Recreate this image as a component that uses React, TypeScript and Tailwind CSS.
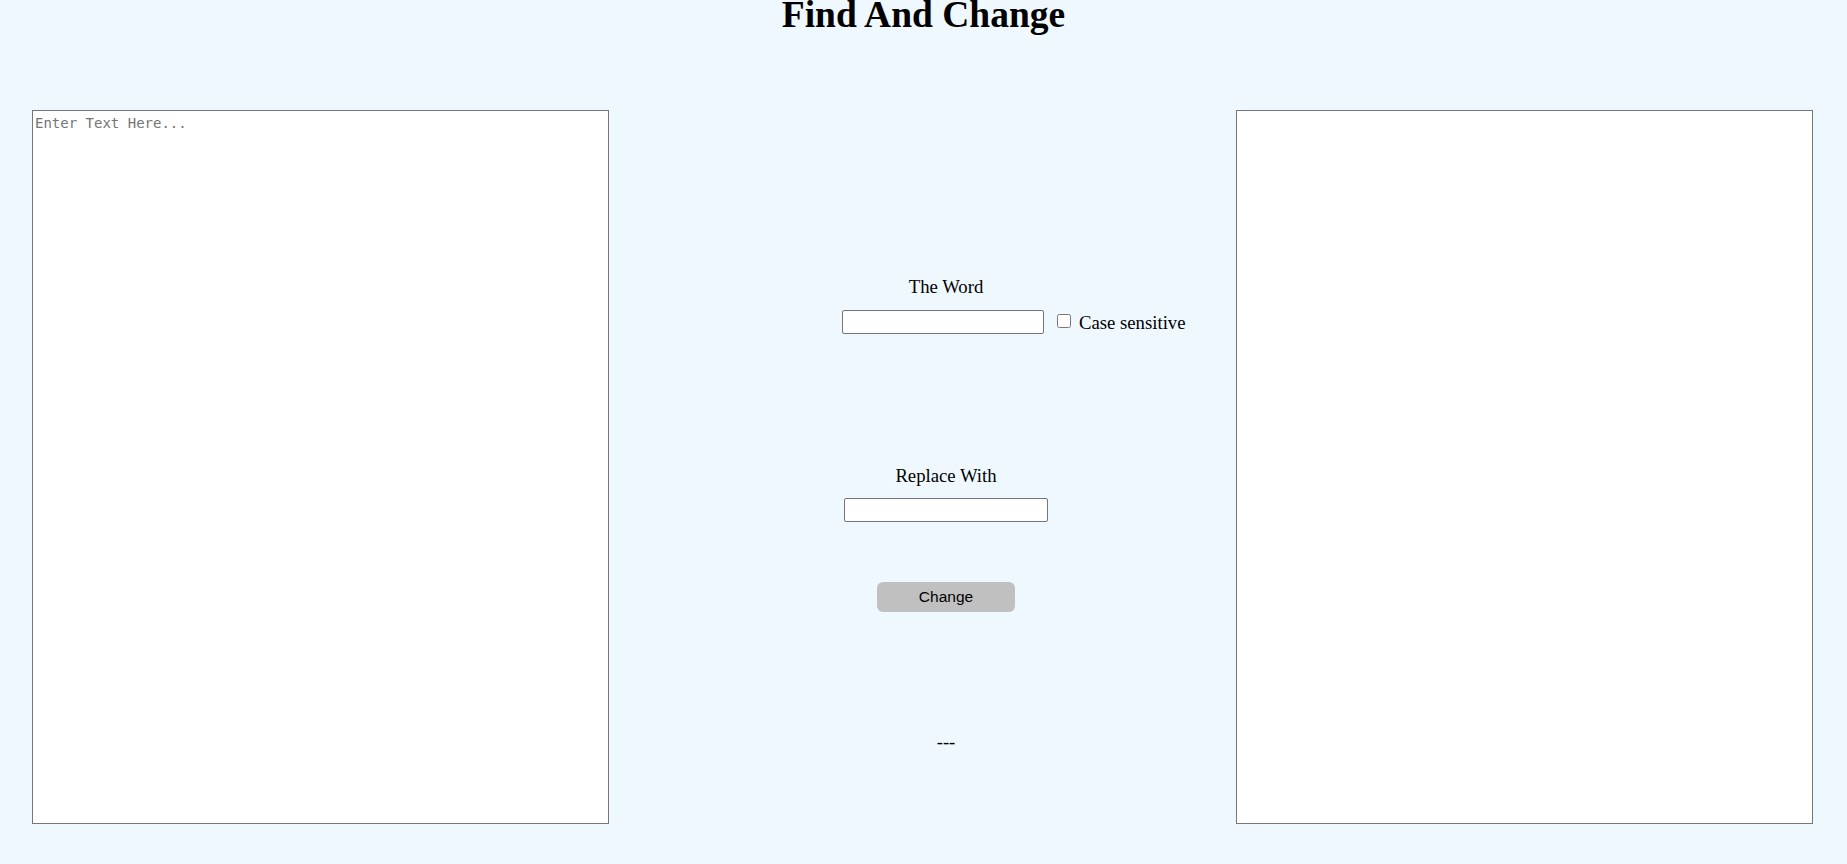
import React from 'react';

const App = () => {
  return (
    <div className="min-h-screen bg-[#f0f8ff] text-black font-['Liberation_Serif',serif]">
      <h1 className="text-center text-[37.5px] leading-[30px] font-bold">Find And Change</h1>

      <div className="flex mt-[80px] pl-[32px]">
        <textarea
          placeholder="Enter Text Here..."
          className="w-[577px] h-[714px] shrink-0 bg-white border border-[#767676] p-[2px] resize-none outline-none font-['DejaVu_Sans_Mono',monospace] text-[14px] placeholder:text-[#757575]"
        />

        <div className="w-[627px] shrink-0 pl-[47px] flex flex-col items-center text-[18.72px] leading-[21px]">
          <p className="mt-[166px]">The Word</p>
          <div className="relative mt-[13px] mr-[6px]">
            <input
              type="text"
              className="block w-[202px] h-[24px] bg-white border border-[#767676] rounded-[2px] outline-none"
            />
            <label className="absolute left-full top-0 h-[24px] ml-[13px] flex items-center whitespace-nowrap">
              <input type="checkbox" className="w-[14px] h-[14px] m-0 -mt-[2px]" />
              <span className="ml-[8px]">Case sensitive</span>
            </label>
          </div>

          <p className="mt-[131px]">Replace With</p>
          <input
            type="text"
            className="block mt-[12px] w-[204px] h-[24px] bg-white border border-[#767676] rounded-[2px] outline-none"
          />

          <button className="mt-[60px] w-[138px] h-[30px] bg-[#c0c0c0] rounded-[6px] font-['Liberation_Sans',Arial,sans-serif] text-[15.5px] leading-none text-black">
            Change
          </button>

          <p className="mt-[119px]">---</p>
        </div>

        <textarea className="w-[577px] h-[714px] shrink-0 bg-white border border-[#767676] p-[2px] resize-none outline-none" />
      </div>
    </div>
  );
};

export default App;
